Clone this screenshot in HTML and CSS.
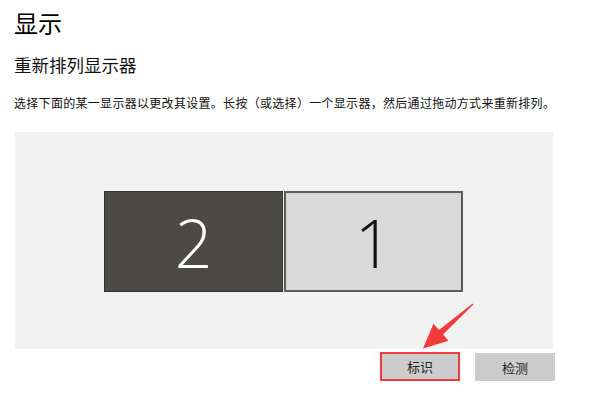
FILE: index.html
```html
<!DOCTYPE html>
<html lang="zh-CN">
<head>
<meta charset="utf-8">
<title>显示</title>
<link rel="stylesheet" href="styles.css">
</head>
<body>
<div class="page">
  <h1 class="title">显示</h1>
  <h2 class="subtitle">重新排列显示器</h2>
  <p class="desc">选择下面的某一显示器以更改其设置。长按（或选择）一个显示器，然后通过拖动方式来重新排列。</p>
  <div class="panel">
    <div class="monitors">
      <div class="monitor monitor-dark">2</div>
      <div class="monitor monitor-light">1</div>
    </div>
  </div>
  <div class="actions">
    <button class="btn btn-marked">标识</button>
    <button class="btn">检测</button>
  </div>
  <svg class="annotation" width="600" height="408" viewBox="0 0 600 408" aria-hidden="true">
    <polygon points="473.4,304.5 443,334.6 448.5,340.8 423,348.5 433.4,323.8 439,330 472.6,303.5" fill="#f23b3b"/>
  </svg>
</div>
</body>
</html>
```
FILE: styles.css
```css
html, body {
  margin: 0;
  padding: 0;
  background: #ffffff;
}

.page {
  position: relative;
  width: 600px;
  height: 408px;
  overflow: hidden;
  font-family: "Noto Sans CJK SC", "Noto Sans", sans-serif;
  color: #111111;
}

.title {
  margin: 7px 0 0 14px;
  font-size: 24px;
  line-height: 32px;
  font-weight: 400;
  color: #000000;
}

.subtitle {
  margin: 14px 0 0 14px;
  font-size: 17.5px;
  line-height: 24px;
  font-weight: 400;
  color: #111111;
}

.desc {
  margin: 17px 0 0 14px;
  font-size: 12px;
  line-height: 18px;
  letter-spacing: 0.3px;
  color: #111111;
}

.panel {
  margin: 20px 0 0 15px;
  width: 538px;
  height: 217px;
  background: #f2f2f2;
  box-sizing: border-box;
  padding: 59px 0 0 89px;
}

.monitors {
  display: flex;
  gap: 1px;
}

.monitor {
  width: 179px;
  height: 101px;
  box-sizing: border-box;
  display: flex;
  align-items: center;
  justify-content: center;
  font-family: "Open Sans", "Noto Sans", sans-serif;
  font-weight: 300;
  font-size: 66px;
  line-height: 1;
}

.monitor-dark {
  background: #4b4a47;
  border: 1px solid #333333;
  color: #ffffff;
}

.monitor-light {
  background: #d9d9d9;
  border: 2px solid #5a5a5a;
  color: #111111;
}

.actions {
  display: flex;
  gap: 15px;
  margin: 4px 0 0 380px;
}

.btn {
  width: 80px;
  height: 28px;
  border: none;
  background: #cccccc;
  font-family: "Noto Sans CJK SC", "Noto Sans", sans-serif;
  font-size: 13px;
  color: #222222;
  padding: 0;
}

.btn-marked {
  border: 2px solid #ee3b3b;
  height: 29px;
  margin-top: -1px;
}

.annotation {
  position: absolute;
  left: 0;
  top: 0;
  pointer-events: none;
}
```
